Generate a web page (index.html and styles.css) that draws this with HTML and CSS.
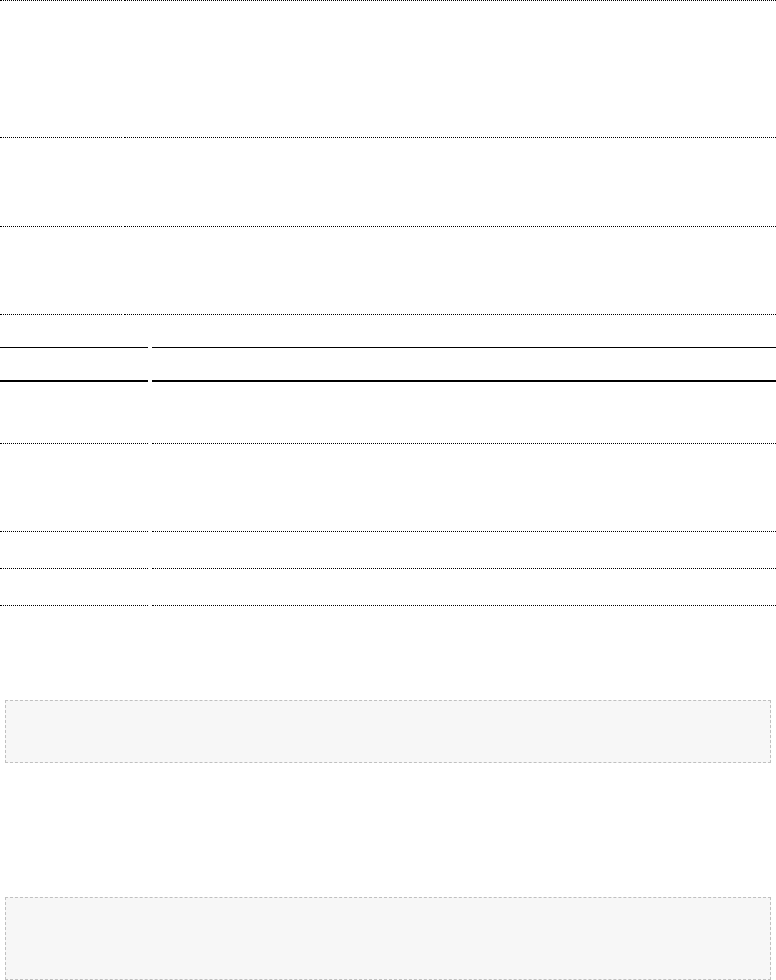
FILE: index.html
```html
<!DOCTYPE html>
<html lang="en">
<head>
<meta charset="utf-8">
<title>Document</title>
<link rel="stylesheet" href="styles.css">
</head>
<body>
<main class="page">
  <section class="deflist">
    <div class="drow drow-first drow-tall">
      <div class="dterm"></div>
      <div class="ddesc"></div>
    </div>
    <div class="drow drow-mid">
      <div class="dterm"></div>
      <div class="ddesc"></div>
    </div>
    <div class="drow drow-mid2">
      <div class="dterm"></div>
      <div class="ddesc"></div>
    </div>
  </section>

  <section class="datatable">
    <div class="thead">
      <div class="th"></div>
      <div class="th"></div>
    </div>
    <div class="trow trow-a">
      <div class="td"></div>
      <div class="td"></div>
    </div>
    <div class="trow trow-b">
      <div class="td"></div>
      <div class="td"></div>
    </div>
    <div class="trow trow-c">
      <div class="td"></div>
      <div class="td"></div>
    </div>
    <div class="trow trow-c">
      <div class="td"></div>
      <div class="td"></div>
    </div>
  </section>

  <pre class="codebox codebox-short"></pre>
  <pre class="codebox codebox-tall"></pre>
</main>
</body>
</html>
```
FILE: styles.css
```css
html, body {
  margin: 0;
  padding: 0;
  background: #ffffff;
  font-family: "Liberation Sans", Arial, sans-serif;
  color: #000;
}

.page {
  display: flex;
  flex-direction: column;
}

/* top definition list */
.deflist {
  display: flex;
  flex-direction: column;
}

.drow {
  display: grid;
  grid-template-columns: 122px 1fr;
  column-gap: 2px;
}

.dterm,
.ddesc {
  border-bottom: 1px dotted #000;
  box-sizing: border-box;
}

.drow-first .dterm,
.drow-first .ddesc {
  border-top: 1px dotted #000;
}

.drow-tall { height: 138px; }
.drow-mid { height: 89px; }
.drow-mid2 { height: 88px; }

/* data table */
.datatable {
  margin-top: 32px;
  display: flex;
  flex-direction: column;
}

.thead,
.trow {
  display: grid;
  grid-template-columns: 148px 1fr;
  column-gap: 4px;
}

.th {
  box-sizing: border-box;
  height: 35px;
  border-top: 1px solid #000;
  border-bottom: 2px solid #000;
}

.td {
  box-sizing: border-box;
  border-bottom: 1px dotted #000;
}

.trow-a .td { height: 62px; }
.trow-b .td { height: 88px; }
.trow-c .td { height: 37px; }

/* code boxes */
.codebox {
  box-sizing: border-box;
  margin: 0 5px;
  background: #f7f7f7;
  border: 1px dashed #c0c0c0;
  font-family: "Liberation Mono", monospace;
}

.codebox-short {
  margin-top: 94px;
  height: 63px;
}

.codebox-tall {
  margin-top: 134px;
  height: 83px;
}
```
